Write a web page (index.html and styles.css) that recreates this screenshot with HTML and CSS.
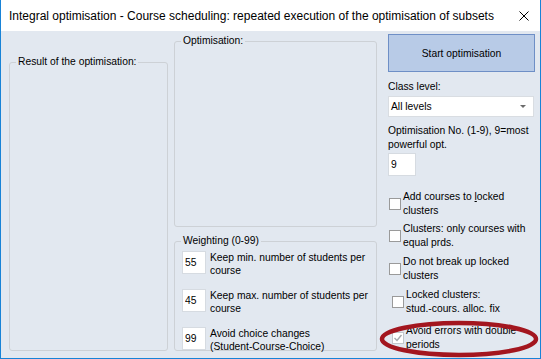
FILE: index.html
```html
<!DOCTYPE html>
<html lang="en">
<head>
  <meta charset="UTF-8">
  <title>Integral optimisation</title>
  <link rel="stylesheet" href="styles.css">
</head>
<body>
  <div class="window">
    <div class="titlebar">
      <span class="title">Integral optimisation - Course scheduling: repeated execution of the optimisation of subsets</span>
      <svg class="close" width="10" height="10" viewBox="0 0 10 10">
        <path d="M0.5 0.5 L9.5 9.5 M9.5 0.5 L0.5 9.5" stroke="#000" stroke-width="1" fill="none"/>
      </svg>
    </div>
    <div class="content">
      <fieldset class="group result"><legend>Result of the optimisation:</legend></fieldset>

      <div class="middle">
        <fieldset class="group optim"><legend>Optimisation:</legend></fieldset>
        <fieldset class="group weighting">
          <legend>Weighting (0-99)</legend>
          <div class="weight-row"><input class="num" value="55"><span>Keep min. number of students per<br>course</span></div>
          <div class="weight-row"><input class="num" value="45"><span>Keep max. number of students per<br>course</span></div>
          <div class="weight-row"><input class="num" value="99"><span>Avoid choice changes<br>(Student-Course-Choice)</span></div>
        </fieldset>
      </div>

      <div class="side">
        <button class="start">Start optimisation</button>
        <div class="label class-level">Class level:</div>
        <div class="combo"><span>All levels</span><span class="arrow"></span></div>
        <div class="label opt-no">Optimisation No. (1-9), 9=most<br>powerful opt.</div>
        <input class="num single" value="9">

        <div class="check c1"><span class="box"></span><span>Add courses to <u>l</u>ocked<br>clusters</span></div>
        <div class="check c2"><span class="box"></span><span>Clusters: only courses with<br>equal prds.</span></div>
        <div class="check c3"><span class="box"></span><span>Do not break up locked<br>clusters</span></div>
        <div class="check c4 indent"><span class="box"></span><span>Locked clusters:<br>stud.-cours. alloc. fix</span></div>
        <div class="check c5 indent"><span class="box checked"><svg width="10" height="10" viewBox="0 0 10 10"><path d="M1.5 5 L4 7.5 L8.5 2" stroke="#a4a8ad" stroke-width="1.4" fill="none"/></svg></span><span>Avoid errors with double<br>periods</span></div>
      </div>
    </div>

    <svg class="highlight" width="162" height="40" viewBox="0 0 162 40">
      <ellipse cx="81" cy="20" rx="77" ry="16" fill="none" stroke="#a3161f" stroke-width="4.5"/>
    </svg>
  </div>
</body>
</html>
```

FILE: styles.css
```css
html, body { margin: 0; padding: 0; background: #fff; }
body { font-family: "Liberation Sans", Arial, sans-serif; font-size: 10.3px; color: #000; }

.window {
  position: relative; width: 541px; height: 359px; box-sizing: border-box;
  border: 1px solid #1883d7; border-top: 0; overflow: hidden;
}

/* title bar */
.titlebar {
  height: 31px; background: #fff; display: flex; align-items: center;
  justify-content: space-between; padding-left: 8px;
}
.title { font-size: 12px; white-space: nowrap; }
.close { margin-right: 11px; margin-top: 1px; }

/* dialog body */
.content {
  display: flex; height: 327px; padding-left: 8px; background: #e2e8f0;
}

.group {
  margin: 0; padding: 0 6px; min-width: 0; box-sizing: border-box;
  border: 1px solid #cdd1d6; border-radius: 3px;
}
.group legend { padding: 0 2px; line-height: 12px; }

.result { width: 159px; height: 295px; margin-top: 25px; }

.middle { width: 203px; margin-left: 6px; padding-top: 4px; display: flex; flex-direction: column; }
.optim { height: 192px; }
.weighting { height: 116px; margin-top: 8px; padding-top: 4px; }

.weight-row { display: flex; align-items: flex-start; margin-left: 1px; line-height: 13px; white-space: nowrap; }
.weight-row + .weight-row { margin-top: 12px; }
.weight-row span { margin-left: 4px; }

.num {
  width: 24px; height: 23px; box-sizing: border-box; margin: 0;
  border: 1px solid #d6dbe1; background: #fff; padding: 0 0 0 2px;
  font: inherit; color: #000; outline: none;
}

/* right column */
.side { width: 147px; margin-left: 11px; padding-top: 3px; display: flex; flex-direction: column; align-items: flex-start; }

.start {
  width: 147px; height: 38px; margin: 0; padding: 0;
  background: #b8cbe7; border: 1px solid #6e8fc6;
  font: inherit; color: #000;
}

.label { white-space: nowrap; }
.class-level { margin-top: 8px; line-height: 13px; }
.opt-no { margin-top: 7px; line-height: 14px; }

.combo {
  width: 146px; height: 21px; margin-top: 3px; box-sizing: border-box;
  background: #fff; border: 1px solid #d9dde2;
  display: flex; align-items: center; justify-content: space-between; padding: 0 7px 0 2px;
}
.arrow {
  width: 0; height: 0;
  border-left: 3px solid transparent; border-right: 3px solid transparent; border-top: 3px solid #6b6b6b;
}

.single { width: 28px; margin-top: 1px; }

.check { display: flex; align-items: center; line-height: 14px; white-space: nowrap; margin-left: 1px; }
.check .box {
  width: 12px; height: 12px; box-sizing: border-box; flex: none; margin-right: 2px;
  background: #fff; border: 1px solid #9a9a9a;
  display: flex; align-items: center; justify-content: center;
}
.check .box.checked { border-color: #c3c7cc; }
.check.indent { margin-left: 4px; }
.c1 { margin-top: 14px; }
.c2 { margin-top: 4px; }
.c3 { margin-top: 5px; }
.c4 { margin-top: 5px; }
.c5 { margin-top: 8px; }

/* red annotation ring */
.highlight { position: absolute; left: 377px; top: 319px; }
```
